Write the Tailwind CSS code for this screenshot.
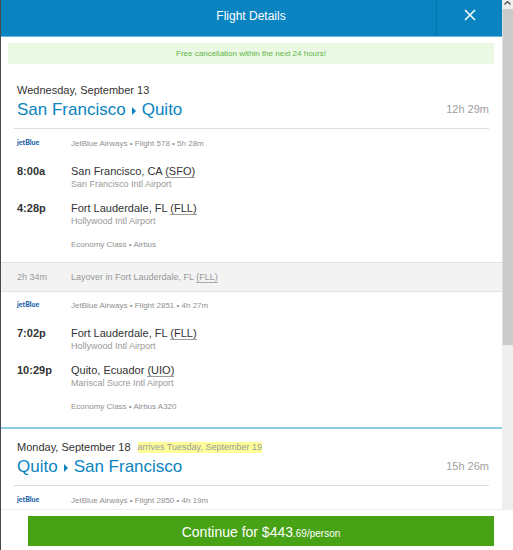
<!DOCTYPE html>
<html lang="en">
<head>
  <meta charset="UTF-8">
  <meta name="viewport" content="width=device-width, initial-scale=1.0">
  <title>Flight Details</title>
  <script src="https://cdn.jsdelivr.net/npm/@tailwindcss/browser@4"></script>
</head>
<body class="h-screen flex flex-col overflow-hidden border-l border-[#4a4a4a] bg-white font-['Liberation_Sans',Arial,sans-serif] text-[#333]">
  <div class="flex flex-1 min-h-0">
    <div class="flex-1 min-w-0 overflow-hidden">
      <!-- Title bar -->
      <header class="flex h-[37px] border-b border-[#6db5dc] bg-[#0a84c1] text-white">
        <h1 class="flex-1 pl-[65px] pt-2 text-center text-[12px] leading-[17px]">Flight Details</h1>
        <button type="button" aria-label="Close" class="flex w-[66px] items-start justify-center border-l border-[#0873aa] pt-[9px]">
          <svg class="size-3" viewBox="0 0 12 12" fill="none" stroke="currentColor" stroke-width="1.5"><path d="M1 1l10 10M11 1L1 11"/></svg>
        </button>
      </header>

      <p class="mx-[7px] mt-[6px] mr-2 bg-[#eaf8e4] text-center text-[8px] leading-[21px] text-[#5fb548]">Free cancellation within the next 24 hours!</p>

      <!-- Outbound -->
      <section class="border-b-2 border-[#8fcae4] pt-[18px] pb-[14px]">
        <div class="mx-[13px] border-b border-[#ddd] pb-[7px] pl-[3px]">
          <p class="text-[11px] leading-4">Wednesday, September 13</p>
          <div class="flex items-center justify-between">
            <h2 class="flex items-center gap-[6px] text-[17px] leading-[23px] text-[#0a84c1]">San Francisco
              <svg class="mt-[3px] h-2 w-1" viewBox="0 0 4 8" fill="currentColor"><path d="M0 0l4 4-4 4z"/></svg>
              Quito</h2>
            <span class="text-[11px] text-[#a0a0a0]">12h 29m</span>
          </div>
        </div>

        <div class="grid grid-cols-[54px_1fr] px-4 pt-2 pb-[11px]">
          <span class="font-[Lato,sans-serif] text-[7px] leading-[11px] font-black text-[#1b5fa8]">jetBlue</span>
          <p class="text-[8px] leading-[14px] text-[#909090]">JetBlue Airways • Flight 578 • 5h 28m</p>
          <b class="mt-[13px] text-[11px] leading-[14px]">8:00a</b>
          <div class="mt-[13px]">
            <p class="text-[11px] leading-[14px]">San Francisco, CA <abbr class="border-b border-[#999] no-underline">(SFO)</abbr></p>
            <p class="text-[9px] leading-[13px] text-[#999]">San Francisco Intl Airport</p>
          </div>
          <b class="mt-[10px] text-[11px] leading-[14px]">4:28p</b>
          <div class="mt-[10px]">
            <p class="text-[11px] leading-[14px]">Fort Lauderdale, FL <abbr class="border-b border-[#999] no-underline">(FLL)</abbr></p>
            <p class="text-[9px] leading-[13px] text-[#999]">Hollywood Intl Airport</p>
          </div>
          <p class="col-start-2 mt-[11px] text-[8px] leading-3 text-[#909090]">Economy Class • Airbus</p>
        </div>

        <!-- Layover -->
        <div class="grid grid-cols-[54px_1fr] border-y border-[#e2e2e2] bg-[#f3f3f3] px-4 text-[9px] leading-7 text-[#999]">
          <span>2h 34m</span>
          <span>Layover in Fort Lauderdale, FL <abbr class="border-b border-[#aaa] no-underline">(FLL)</abbr></span>
        </div>

        <div class="grid grid-cols-[54px_1fr] px-4 pt-[7px]">
          <span class="font-[Lato,sans-serif] text-[7px] leading-[11px] font-black text-[#1b5fa8]">jetBlue</span>
          <p class="text-[8px] leading-[14px] text-[#909090]">JetBlue Airways • Flight 2851 • 4h 27m</p>
          <b class="mt-[13px] text-[11px] leading-[14px]">7:02p</b>
          <div class="mt-[13px]">
            <p class="text-[11px] leading-[14px]">Fort Lauderdale, FL <abbr class="border-b border-[#999] no-underline">(FLL)</abbr></p>
            <p class="text-[9px] leading-[13px] text-[#999]">Hollywood Intl Airport</p>
          </div>
          <b class="mt-[10px] text-[11px] leading-[14px]">10:29p</b>
          <div class="mt-[10px]">
            <p class="text-[11px] leading-[14px]">Quito, Ecuador <abbr class="border-b border-[#999] no-underline">(UIO)</abbr></p>
            <p class="text-[9px] leading-[13px] text-[#999]">Mariscal Sucre Intl Airport</p>
          </div>
          <p class="col-start-2 mt-[11px] text-[8px] leading-3 text-[#909090]">Economy Class • Airbus A320</p>
        </div>
      </section>

      <!-- Return -->
      <section class="pt-[10px]">
        <div class="mx-[13px] border-b border-[#ddd] pb-[7px] pl-[3px]">
          <p class="flex items-center gap-[7px] text-[11px] leading-4">Monday, September 18 <mark class="bg-[#ffff99] text-[9px] leading-[11px] text-[#999]">arrives Tuesday, September 19</mark></p>
          <div class="flex items-center justify-between">
            <h2 class="flex items-center gap-[6px] text-[17px] leading-[23px] text-[#0a84c1]">Quito
              <svg class="mt-[3px] h-2 w-1" viewBox="0 0 4 8" fill="currentColor"><path d="M0 0l4 4-4 4z"/></svg>
              San Francisco</h2>
            <span class="text-[11px] text-[#a0a0a0]">15h 26m</span>
          </div>
        </div>
        <div class="grid grid-cols-[54px_1fr] px-4 pt-2">
          <span class="font-[Lato,sans-serif] text-[7px] leading-[11px] font-black text-[#1b5fa8]">jetBlue</span>
          <p class="text-[8px] leading-[14px] text-[#909090]">JetBlue Airways • Flight 2850 • 4h 19m</p>
        </div>
      </section>
    </div>

    <!-- Scrollbar -->
    <div class="flex w-[11px] flex-col bg-[#efefef]" aria-hidden="true">
      <div class="flex h-[9px] justify-center pt-px">
        <svg class="h-1 w-[7px]" viewBox="0 0 7 4" fill="none" stroke="#555" stroke-width="1.4"><path d="M.5 3.5l3-3 3 3"/></svg>
      </div>
      <div class="h-[66%] border-l border-[#e0e0e0] bg-[#cbcbcb]"></div>
    </div>
  </div>

  <!-- Booking bar -->
  <footer class="border-t border-[#eee] pt-[6px] pr-[19px] pb-1 pl-[27px]">
    <button type="button" class="flex h-[30px] w-full items-baseline justify-center bg-[#48a216] pt-[8px] text-[14px] leading-4 text-white">Continue for $443<span class="text-[10px]">.69/person</span></button>
  </footer>
</body>
</html>
